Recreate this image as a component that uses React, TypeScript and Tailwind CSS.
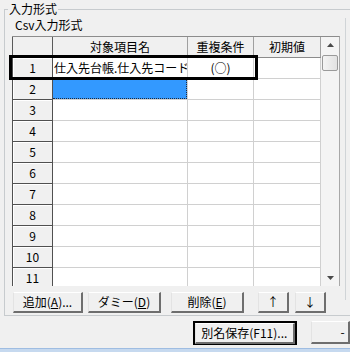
import React from "react";

const rows = [1, 2, 3, 4, 5, 6, 7, 8, 9, 10, 11];

function Btn({
  children,
  className = "",
}: {
  children?: React.ReactNode;
  className?: string;
}) {
  return (
    <div
      className={`h-[21px] bg-[#f0f0f0] border-t border-l border-t-white border-l-[#e3e3e3] border-r-2 border-b-2 border-r-[#6e6e6e] border-b-[#6e6e6e] flex items-center justify-center text-[12px] leading-none text-black ${className}`}
    >
      {children}
    </div>
  );
}

function Tri({ down = false }: { down?: boolean }) {
  return (
    <svg width="7" height="4" viewBox="0 0 7 4">
      {down ? (
        <path d="M0 0 L7 0 L3.5 4 Z" fill="#4a4a4a" />
      ) : (
        <path d="M0 4 L7 4 L3.5 0 Z" fill="#4a4a4a" />
      )}
    </svg>
  );
}

export default function App() {
  return (
    <div className="w-[350px] h-[352px] bg-[#f0f0f0] overflow-hidden flex flex-col font-['Noto_Sans_CJK_JP','Noto_Sans',sans-serif] text-black">
      {/* Group box */}
      <div className="relative mt-[9px] ml-[4px] w-[400px] h-[307px] border border-[#c7cbce] flex shrink-0">
        <span className="absolute left-[3px] top-[-7px] px-[1px] bg-[#f0f0f0] text-[12px] leading-[12px]">
          入力形式
        </span>
        {/* left column */}
        <div className="w-[336px] flex flex-col">
          <div className="ml-[10px] mt-[8px] h-[13px] text-[12px] leading-[13px]">
            Csv入力形式
          </div>
          {/* table */}
          <div className="relative ml-[7px] mt-[5px] w-[328px] h-[250px] flex">
            <div className="w-[309px] h-[250px] overflow-hidden flex flex-col bg-white">
              {/* header */}
              <div className="grid grid-cols-[41px_135px_66px_67px] h-[22px] border-t border-b border-[#8c8c8c] bg-[#f0f0f0] shrink-0">
                <div className="border-l border-r border-[#5a5a5a]" />
                <div className="border-r border-[#a0a0a0] flex items-center justify-center text-[12px] leading-none">
                  対象項目名
                </div>
                <div className="border-r border-[#a0a0a0] flex items-center justify-center text-[12px] leading-none">
                  重複条件
                </div>
                <div className="border-r border-[#a0a0a0] flex items-center justify-center text-[12px] leading-none">
                  初期値
                </div>
              </div>
              {rows.map((n) => (
                <div
                  key={n}
                  className="grid grid-cols-[41px_135px_66px_67px] h-[21px] shrink-0"
                >
                  <div className="bg-[#f0f0f0] border-l border-r border-b border-[#505050] shadow-[inset_1px_1px_0_#ffffff] flex items-center justify-center text-[12px] leading-none">
                    {n}
                  </div>
                  <div className="border-r border-b border-[#d0d0d0] flex items-center overflow-hidden whitespace-nowrap text-[12px] leading-none">
                    {n === 1 ? (
                      <span className="pl-[1px]">仕入先台帳.仕入先コード</span>
                    ) : n === 2 ? (
                      <div className="w-full h-full bg-[#3399ff] border-r border-b border-dotted border-[#1b2b40]" />
                    ) : null}
                  </div>
                  <div className="border-r border-b border-[#d0d0d0] flex items-center justify-center text-[12px] leading-none">
                    {n === 1 ? "(○)" : null}
                  </div>
                  <div className="border-r border-b border-[#d0d0d0]" />
                </div>
              ))}
            </div>
            {/* scrollbar */}
            <div className="w-[19px] h-[250px] bg-[#f4f4f4] border-t border-[#8c8c8c] border-r border-r-[#a8a8a8] flex flex-col">
              <div className="h-[16px] flex items-center justify-center">
                <Tri />
              </div>
              <div className="mt-[2px] mx-[1px] h-[16px] rounded-[2px] border border-[#9a9a9a] bg-gradient-to-r from-[#f4f4f4] to-[#e2e2e2]" />
              <div className="flex-1" />
              <div className="h-[17px] flex items-center justify-center">
                <Tri down />
              </div>
            </div>
            {/* selection outline over row 1 */}
            <div className="absolute left-[-3px] top-[19px] w-[249px] h-[25px] border-[3px] border-black" />
          </div>
          {/* buttons */}
          <div className="ml-[8px] mt-[6px] flex">
            <Btn className="w-[70px]">
              <span>
                追加(<span className="underline">A</span>)...
              </span>
            </Btn>
            <Btn className="w-[73px] ml-[5px]">
              <span>
                ダミー(<span className="underline">D</span>)
              </span>
            </Btn>
            <Btn className="w-[73px] ml-[10px]">
              <span>
                削除(<span className="underline">E</span>)
              </span>
            </Btn>
            <Btn className="w-[31px] ml-[14px]">↑</Btn>
            <Btn className="w-[31px] ml-[6px]">↓</Btn>
          </div>
        </div>
        {/* right side line */}
        <div className="ml-[4px] mt-[8px] h-[282px] border-l border-[#d0d4d7]" />
      </div>
      {/* bottom buttons */}
      <div className="mt-[5px] flex h-[24px] shrink-0">
        <div className="ml-[193px] w-[111px] h-[24px] border-2 border-black flex">
          <Btn className="flex-1 h-[20px]">別名保存(F11)...</Btn>
        </div>
        <Btn className="ml-[14px] w-[40px] h-[23px] justify-start pl-[29px]">-</Btn>
      </div>
      <div className="mt-[3px] h-[4px] bg-[#c6d9ef] border-t border-[#9fbde2] shrink-0" />
    </div>
  );
}
